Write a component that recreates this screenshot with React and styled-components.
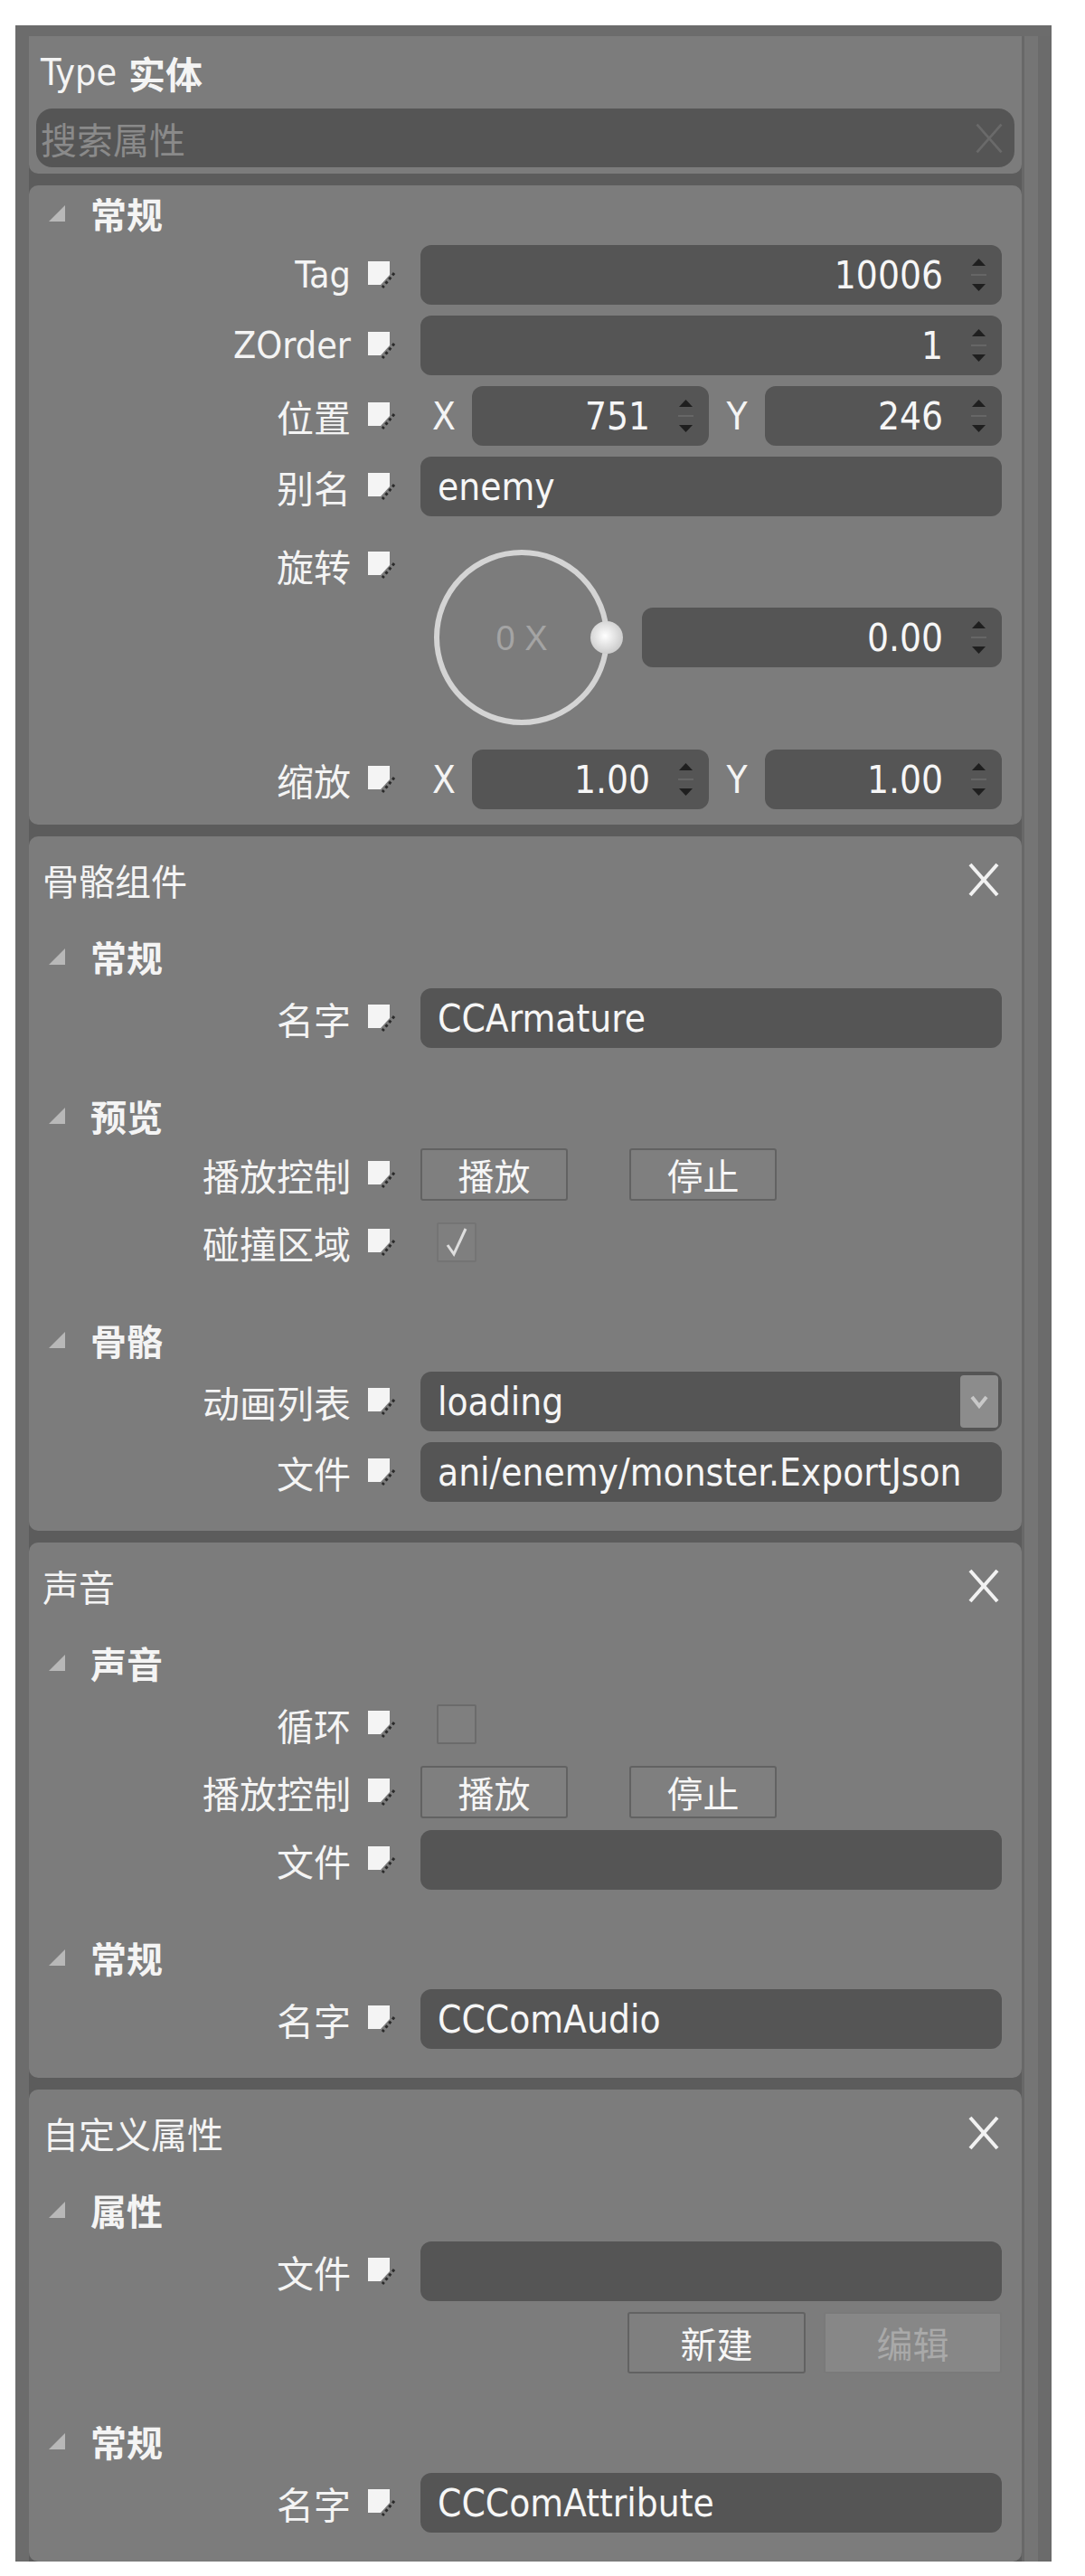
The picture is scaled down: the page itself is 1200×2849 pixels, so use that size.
import React from 'react';
import styled, { createGlobalStyle } from 'styled-components';

const GlobalStyle = createGlobalStyle`
  html, body {
    margin: 0;
    padding: 0;
    background: #ffffff;
  }
  body {
    font-family: "DejaVu Sans Condensed", "DejaVu Sans", "Noto Sans CJK SC", sans-serif;
    font-stretch: condensed;
    color: #f4f4f4;
  }
  * { box-sizing: border-box; }
`;

const Frame = styled.div`
  margin: 28px 0 0 17px;
  width: 1146px;
  height: 2805px;
  background: #6c6c6c;
  padding: 12px 0 0 15px;
  display: flex;
  overflow: hidden;
`;

const Column = styled.div`
  width: 1098px;
  flex-shrink: 0;
  display: flex;
  flex-direction: column;
  gap: 13px;
  background: #5c5c5c;
`;

const ScrollTrack = styled.div`
  flex: 1;
  border-left: 3px solid #686868;
  background: linear-gradient(to right, #757575 0 15px, #6b6b6b 15px);
`;

const HeaderCard = styled.div`
  background: #7c7c7c;
  border-radius: 0 0 10px 10px;
  padding: 12px 8px 7px;
`;

const TypeLine = styled.div`
  height: 56px;
  display: flex;
  align-items: center;
  padding-left: 5px;
  font-size: 41px;
  gap: 13px;
`;

const TypeName = styled.b`
  font-weight: 700;
`;

const SearchBox = styled.div`
  margin-top: 12px;
  height: 65px;
  border-radius: 18px;
  background: #555555;
  display: flex;
  align-items: center;
  justify-content: space-between;
  padding: 0 10px 0 5px;
  font-size: 40px;
  color: #8a8a8a;
`;

const Card = styled.section`
  background: #7c7c7c;
  border-radius: 10px;
  padding: ${p => (p.$titled ? '14px 22px 32px 0' : '8px 22px 17px 0')};
  flex: ${p => (p.$fill ? 1 : 'none')};
`;

const TitleRow = styled.div`
  height: 68px;
  margin-bottom: 28px;
  padding-left: 15px;
  display: flex;
  align-items: center;
  justify-content: space-between;
  font-size: 40px;
`;

const Sections = styled.div`
  display: flex;
  flex-direction: column;
  gap: 52px;
`;

const Section = styled.div`
  display: flex;
  flex-direction: column;
  gap: 12px;
`;

const Heading = styled.div`
  height: 46px;
  display: flex;
  align-items: center;
  padding-left: 22px;
  font-size: 40px;
  font-weight: 700;
  gap: 28px;
`;

const Row = styled.div`
  display: grid;
  grid-template-columns: 356px 77px 1fr;
  align-items: ${p => (p.$top ? 'start' : 'center')};
  min-height: ${p => p.$h}px;
`;

const Label = styled.div`
  height: ${p => p.$h}px;
  margin-top: ${p => (p.$top ? 9 : 0)}px;
  display: flex;
  align-items: center;
  justify-content: flex-end;
  font-size: 41px;
  white-space: nowrap;
`;

const MarkCell = styled.div`
  height: ${p => p.$h}px;
  margin-top: ${p => (p.$top ? 9 : 0)}px;
  display: flex;
  align-items: center;
  padding-left: 19px;
`;

const Field = styled.div`
  height: 66px;
  border-radius: 12px;
  background: #555555;
  display: flex;
  align-items: center;
  justify-content: ${p => (p.$number ? 'flex-end' : 'flex-start')};
  padding: ${p => (p.$number ? '0 11px 0 0' : '0 4px 0 19px')};
  font-size: 42px;
  color: #f6f6f6;
  white-space: nowrap;
  overflow: hidden;
  flex: ${p => (p.$grow ? 1 : 'none')};
`;

const FieldText = styled.span`
  flex: 1;
`;

const SpinBox = styled.span`
  display: flex;
  margin-left: 25px;
`;

const DropButton = styled.span`
  width: 42px;
  height: 58px;
  border-radius: 4px;
  background: #8c8c8c;
  display: flex;
  align-items: center;
  justify-content: center;
`;

const AxisGrid = styled.div`
  display: grid;
  grid-template-columns: 52px 1fr 52px 1fr;
  column-gap: 5px;
  align-items: center;
`;

const Axis = styled.span`
  font-size: 42px;
  text-align: center;
`;

const RotationArea = styled.div`
  margin: 22px 0 12px;
  height: 200px;
  display: flex;
  align-items: center;
  padding-left: 12px;
  gap: 17px;
`;

const ButtonGroup = styled.div`
  display: flex;
  gap: ${p => p.$gap}px;
  justify-content: ${p => (p.$end ? 'flex-end' : 'flex-start')};
`;

const Button = styled.button`
  width: ${p => p.$w}px;
  height: ${p => p.$h}px;
  border: 2px solid ${p => (p.disabled ? '#7a7a7a' : '#626262')};
  border-radius: 3px;
  background: ${p => (p.disabled ? '#878787' : '#7f7f7f')};
  color: ${p => (p.disabled ? '#a9a9a9' : '#f6f6f6')};
  font-family: inherit;
  font-size: 40px;
  padding: 0;
  display: flex;
  align-items: center;
  justify-content: center;
`;

const Check = styled.span`
  width: 44px;
  height: 44px;
  margin-left: 18px;
  border: 2px solid ${p => (p.$checked ? '#747474' : '#6b6b6b')};
  border-radius: 2px;
  background: #7f7f7f;
  display: flex;
  align-items: center;
  justify-content: center;
`;

const EditMark = () => (
  <svg width="31" height="30" viewBox="0 0 31 30">
    <polygon points="0,0 24,0 24,15 14,26 0,26" fill="#f4f4f4" />
    <line x1="29" y1="13" x2="16" y2="29" stroke="#2a2a2a" strokeWidth="3" strokeDasharray="3 3" />
  </svg>
);

const Spinner = () => (
  <svg width="29" height="36" viewBox="0 0 29 36">
    <polygon points="7,8 14.5,0 22,8" fill="#1f1f1f" />
    <line x1="6" y1="18" x2="23" y2="18" stroke="#666" strokeWidth="2" />
    <polygon points="7,28 22,28 14.5,36" fill="#1f1f1f" />
  </svg>
);

const Triangle = () => (
  <svg width="18" height="18" viewBox="0 0 18 18">
    <polygon points="18,0 18,18 0,18" fill="#b8b8b8" />
  </svg>
);

const CloseIcon = ({ color = '#f2f2f2', size = 40, width = 4 }) => (
  <svg width={size} height={size} viewBox="0 0 40 40">
    <line x1="5" y1="3" x2="35" y2="37" stroke={color} strokeWidth={width} />
    <line x1="35" y1="3" x2="5" y2="37" stroke={color} strokeWidth={width} />
  </svg>
);

const Chevron = () => (
  <svg width="22" height="16" viewBox="0 0 22 16">
    <polyline points="3,3 11,13 19,3" fill="none" stroke="#c8c8c8" strokeWidth="4" />
  </svg>
);

const CheckMark = () => (
  <svg width="30" height="34" viewBox="0 0 30 34">
    <polyline points="5,20 12,30 25,2" fill="none" stroke="#dedede" strokeWidth="3" />
  </svg>
);

const Dial = () => (
  <svg width="216" height="200" viewBox="0 0 216 200">
    <defs>
      <radialGradient id="knob" cx="45%" cy="45%" r="60%">
        <stop offset="0%" stopColor="#ffffff" />
        <stop offset="100%" stopColor="#c8c8c8" />
      </radialGradient>
    </defs>
    <circle cx="100" cy="100" r="94" fill="none" stroke="#d4d4d4" strokeWidth="6" />
    <text x="100" y="114" textAnchor="middle" fontFamily="Liberation Sans" fontSize="38" fill="#a4a4a4">0 X</text>
    <circle cx="194" cy="100" r="18" fill="url(#knob)" />
  </svg>
);

const NumberInput = ({ value }) => (
  <Field $number>
    <span>{value}</span>
    <SpinBox><Spinner /></SpinBox>
  </Field>
);

// one property line: label, edit marker, value editor
const Prop = ({ label, children, top, h = 66 }) => (
  <Row $top={top} $h={h}>
    <Label $top={top} $h={top ? 66 : h}>{label}</Label>
    <MarkCell $top={top} $h={top ? 66 : h}><EditMark /></MarkCell>
    {children}
  </Row>
);

const SectionHeading = ({ children }) => (
  <Heading>
    <Triangle />
    <span>{children}</span>
  </Heading>
);

const PlayButtons = () => (
  <ButtonGroup $gap={68}>
    <Button $w={163} $h={58}>播放</Button>
    <Button $w={163} $h={58}>停止</Button>
  </ButtonGroup>
);

const App = () => (
  <>
    <GlobalStyle />
    <Frame>
      <Column>
        <HeaderCard>
          <TypeLine>
            <span>Type</span>
            <TypeName>实体</TypeName>
          </TypeLine>
          <SearchBox>
            <span>搜索属性</span>
            <CloseIcon color="#6a6a6a" size={36} width={3} />
          </SearchBox>
        </HeaderCard>

        <Card>
          <Section>
            <SectionHeading>常规</SectionHeading>
            <Prop label="Tag"><NumberInput value="10006" /></Prop>
            <Prop label="ZOrder"><NumberInput value="1" /></Prop>
            <Prop label="位置">
              <AxisGrid>
                <Axis>X</Axis>
                <NumberInput value="751" />
                <Axis>Y</Axis>
                <NumberInput value="246" />
              </AxisGrid>
            </Prop>
            <Prop label="别名"><Field>enemy</Field></Prop>
            <Prop label="旋转" top>
              <RotationArea>
                <Dial />
                <Field $number $grow>
                  <span>0.00</span>
                  <SpinBox><Spinner /></SpinBox>
                </Field>
              </RotationArea>
            </Prop>
            <Prop label="缩放">
              <AxisGrid>
                <Axis>X</Axis>
                <NumberInput value="1.00" />
                <Axis>Y</Axis>
                <NumberInput value="1.00" />
              </AxisGrid>
            </Prop>
          </Section>
        </Card>

        <Card $titled>
          <TitleRow>
            <span>骨骼组件</span>
            <CloseIcon />
          </TitleRow>
          <Sections>
            <Section>
              <SectionHeading>常规</SectionHeading>
              <Prop label="名字"><Field>CCArmature</Field></Prop>
            </Section>
            <Section>
              <SectionHeading>预览</SectionHeading>
              <Prop label="播放控制" h={60}><PlayButtons /></Prop>
              <Prop label="碰撞区域"><Check $checked><CheckMark /></Check></Prop>
            </Section>
            <Section>
              <SectionHeading>骨骼</SectionHeading>
              <Prop label="动画列表">
                <Field>
                  <FieldText>loading</FieldText>
                  <DropButton><Chevron /></DropButton>
                </Field>
              </Prop>
              <Prop label="文件"><Field>ani/enemy/monster.ExportJson</Field></Prop>
            </Section>
          </Sections>
        </Card>

        <Card $titled>
          <TitleRow>
            <span>声音</span>
            <CloseIcon />
          </TitleRow>
          <Sections>
            <Section>
              <SectionHeading>声音</SectionHeading>
              <Prop label="循环"><Check /></Prop>
              <Prop label="播放控制" h={60}><PlayButtons /></Prop>
              <Prop label="文件"><Field /></Prop>
            </Section>
            <Section>
              <SectionHeading>常规</SectionHeading>
              <Prop label="名字"><Field>CCComAudio</Field></Prop>
            </Section>
          </Sections>
        </Card>

        <Card $titled $fill>
          <TitleRow>
            <span>自定义属性</span>
            <CloseIcon />
          </TitleRow>
          <Sections>
            <Section>
              <SectionHeading>属性</SectionHeading>
              <Prop label="文件"><Field /></Prop>
              <Row $h={68}>
                <span />
                <span />
                <ButtonGroup $gap={20} $end>
                  <Button $w={197} $h={68}>新建</Button>
                  <Button $w={197} $h={68} disabled>编辑</Button>
                </ButtonGroup>
              </Row>
            </Section>
            <Section>
              <SectionHeading>常规</SectionHeading>
              <Prop label="名字"><Field>CCComAttribute</Field></Prop>
            </Section>
          </Sections>
        </Card>
      </Column>
      <ScrollTrack />
    </Frame>
  </>
);

export default App;
